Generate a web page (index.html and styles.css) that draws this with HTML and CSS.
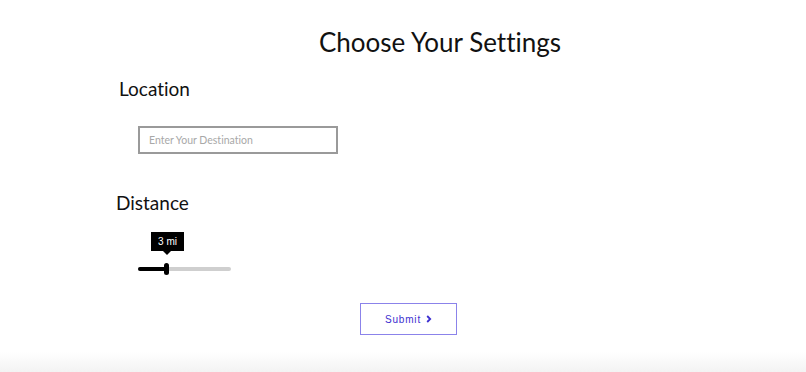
FILE: index.html
```html
<!DOCTYPE html>
<html>
<head>
<meta charset="utf-8">
<link rel="stylesheet" href="styles.css">
</head>
<body>
<main class="page">
  <h1 class="title">Choose Your Settings</h1>
  <section class="field field-location">
    <h2 class="label">Location</h2>
    <input class="input" type="text" placeholder="Enter Your Destination">
  </section>
  <section class="field field-distance">
    <h2 class="label">Distance</h2>
    <div class="slider">
      <div class="tooltip">3 mi</div>
      <div class="track">
        <div class="fill" style="width: 29px"></div>
        <div class="thumb"></div>
      </div>
    </div>
  </section>
  <div class="actions">
    <button class="submit" type="button">Submit
      <svg class="chev" width="6" height="8" viewBox="0 0 6 8"><path d="M1.2 1 L4.2 4 L1.2 7" fill="none" stroke="#1a1a1a" stroke-width="1.8"/></svg>
    </button>
  </div>
  <div class="fade"></div>
</main>
</body>
</html>
```
FILE: styles.css
```css
* { box-sizing: border-box; }
html, body { margin: 0; padding: 0; background: #fff; }
body {
  font-family: "Lato", "Liberation Sans", sans-serif;
  color: #111;
  font-variant-ligatures: none;
}
.page {
  width: 806px;
  height: 372px;
  display: flex;
  flex-direction: column;
  position: relative;
  overflow: hidden;
}
.title {
  margin: 26px 0 0 74px;
  font-size: 26px;
  font-weight: 400;
  line-height: 32px;
  text-align: center;
  color: #111;
}
.label {
  margin: 0;
  font-size: 19px;
  font-weight: 400;
  line-height: 24px;
  color: #111;
}
.field-location { margin-top: 19px; padding-left: 119px; }
.input {
  display: block;
  margin: 25px 0 0 19px;
  width: 200px;
  height: 28px;
  border: 2px solid #9a9a9a;
  padding: 0 9px;
  font-family: "Lato", "Liberation Sans", sans-serif;
  font-variant-ligatures: none;
  font-size: 10.5px;
  outline: none;
}
.input::placeholder { color: #a8a8a8; }
.field-distance { margin-top: 37px; padding-left: 116px; }
.slider {
  margin: 17px 0 0 22px;
  width: 93px;
  display: flex;
  flex-direction: column;
}
.tooltip {
  position: relative;
  align-self: flex-start;
  margin-left: 13px;
  width: 33px;
  height: 19px;
  background: #000;
  color: #fff;
  font-family: "Liberation Sans", sans-serif;
  font-size: 10px;
  line-height: 19px;
  text-align: center;
}
.tooltip::after {
  content: "";
  position: absolute;
  left: 12px;
  bottom: -4px;
  border-left: 4px solid transparent;
  border-right: 4px solid transparent;
  border-top: 4px solid #000;
}
.track {
  position: relative;
  margin-top: 16px;
  height: 4px;
  border-radius: 2px;
  background: #cfcfcf;
}
.fill {
  height: 4px;
  border-radius: 2px;
  background: #000;
}
.thumb {
  position: absolute;
  left: 26px;
  top: -4px;
  width: 5px;
  height: 12px;
  border-radius: 3px;
  background: #000;
}
.actions {
  margin: 32px 0 0 11px;
  display: flex;
  justify-content: center;
}
.submit {
  width: 97px;
  height: 32px;
  background: #fff;
  border: 1px solid #8b83ea;
  color: #3c2fd0;
  font-family: "Liberation Sans", sans-serif;
  font-size: 10px;
  letter-spacing: 0.8px;
  display: flex;
  align-items: center;
  justify-content: center;
  gap: 5px;
  padding: 0;
}
.chev path { stroke: #3c2fd0; }
.fade {
  position: absolute;
  left: 0; right: 0; bottom: 0;
  height: 20px;
  background: linear-gradient(#fff, #f3f3f3);
}
```
